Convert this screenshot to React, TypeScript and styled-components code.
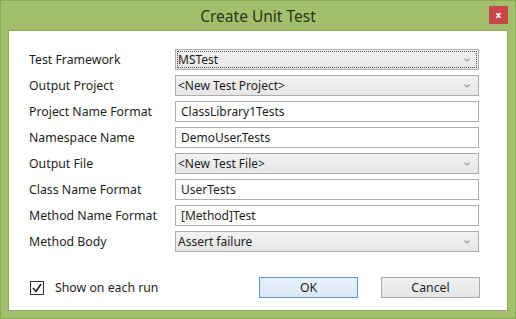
import React from "react";
import styled, { createGlobalStyle, css } from "styled-components";

const Global = createGlobalStyle`
  html, body { margin: 0; padding: 0; }
  body {
    width: 516px; height: 319px; overflow: hidden;
    background: #a4bf6b;
    font-family: "Noto Sans", "Open Sans", sans-serif;
  }
`;

const Window = styled.div`
  box-sizing: border-box;
  width: 516px;
  height: 319px;
  background: #a4bf6b;
  border: 1px solid #8ca95a;
  display: flex;
  flex-direction: column;
`;

const TitleBar = styled.div`
  height: 29px;
  position: relative;
  display: flex;
  align-items: center;
  justify-content: center;
`;

const Title = styled.div`
  font-family: "Noto Sans", sans-serif;
  font-size: 15.5px;
  color: #2c3520;
  margin-top: 1px;
`;

const CloseButton = styled.div`
  position: absolute;
  right: 7px;
  top: 5px;
  width: 19px;
  height: 18px;
  background: #c7474b;
  color: #fff;
  font-family: "DejaVu Sans", sans-serif;
  font-size: 9px;
  font-weight: bold;
  display: flex;
  align-items: center;
  justify-content: center;
  line-height: 1;
`;

const Client = styled.div`
  box-sizing: border-box;
  margin: 0 7px 0 7px;
  height: 281px;
  background: #fff;
  border: 1px solid #8fa85f;
  padding: 18px 27px 0 20px;
  display: flex;
  flex-direction: column;
`;

const Form = styled.div`
  display: grid;
  grid-template-columns: 146px 304px;
  grid-auto-rows: 21px;
  row-gap: 5px;
  align-items: center;
`;

const Label = styled.div`
  font-size: 12.3px;
  color: #1e1e1e;
  white-space: nowrap;
`;

const fieldBase = css`
  box-sizing: border-box;
  height: 21px;
  width: 304px;
  font-size: 12px;
  color: #1e1e1e;
  display: flex;
  align-items: center;
  white-space: nowrap;
`;

const TextBox = styled.div`
  ${fieldBase}
  background: #fff;
  border: 1px solid #abadb3;
  padding-left: 5px;
`;

const Combo = styled.div`
  ${fieldBase}
  position: relative;
  background: linear-gradient(#f2f2f2, #e6e6e6);
  border: 1px solid #adadad;
  padding-left: 2px;
`;

const FocusRing = styled.div`
  position: absolute;
  inset: 1px;
  border: 1px dotted #555;
  pointer-events: none;
`;

const Chevron = styled.svg`
  position: absolute;
  right: 8px;
  top: 8px;
`;

const Footer = styled.div`
  margin-top: 25px;
  display: flex;
  align-items: center;
  height: 21px;
`;

const CheckRow = styled.div`
  display: flex;
  align-items: center;
  gap: 11px;
  font-size: 12.3px;
  color: #1e1e1e;
  margin-left: 1px;
  flex: 1;
`;

const CheckBox = styled.div`
  box-sizing: border-box;
  width: 14px;
  height: 14px;
  border: 1px solid #333;
  background: #fff;
  display: flex;
  align-items: center;
  justify-content: center;
`;

const Buttons = styled.div`
  display: flex;
  gap: 23px;
`;

const Button = styled.div<{ $default?: boolean }>`
  box-sizing: border-box;
  width: 99px;
  height: 21px;
  font-size: 12.3px;
  color: #1e1e1e;
  display: flex;
  align-items: center;
  justify-content: center;
  border: 1px solid ${(p) => (p.$default ? "#5b9bd5" : "#acacac")};
  background: ${(p) =>
    p.$default ? "linear-gradient(#e8f1fb, #dae8f7)" : "linear-gradient(#f0f0f0, #e5e5e5)"};
`;

const ChevronIcon = () => (
  <Chevron width="6" height="4" viewBox="0 0 6 4">
    <path d="M0.5 0.5 L3 3 L5.5 0.5" fill="none" stroke="#9a9a9a" strokeWidth="1.1" />
  </Chevron>
);

type Row = { label: string; value: string; kind: "combo" | "text"; focused?: boolean };

const rows: Row[] = [
  { label: "Test Framework", value: "MSTest", kind: "combo", focused: true },
  { label: "Output Project", value: "<New Test Project>", kind: "combo" },
  { label: "Project Name Format", value: "ClassLibrary1Tests", kind: "text" },
  { label: "Namespace Name", value: "DemoUser.Tests", kind: "text" },
  { label: "Output File", value: "<New Test File>", kind: "combo" },
  { label: "Class Name Format", value: "UserTests", kind: "text" },
  { label: "Method Name Format", value: "[Method]Test", kind: "text" },
  { label: "Method Body", value: "Assert failure", kind: "combo" },
];

export default function App() {
  return (
    <>
      <Global />
      <Window>
        <TitleBar>
          <Title>Create Unit Test</Title>
          <CloseButton>x</CloseButton>
        </TitleBar>
        <Client>
          <Form>
            {rows.map((r) => (
              <React.Fragment key={r.label}>
                <Label>{r.label}</Label>
                {r.kind === "combo" ? (
                  <Combo>
                    {r.focused && <FocusRing />}
                    {r.value}
                    <ChevronIcon />
                  </Combo>
                ) : (
                  <TextBox>{r.value}</TextBox>
                )}
              </React.Fragment>
            ))}
          </Form>
          <Footer>
            <CheckRow>
              <CheckBox>
                <svg width="10" height="10" viewBox="0 0 10 10">
                  <path d="M1 5 L4 8.5 L9 1" fill="none" stroke="#222" strokeWidth="1.6" />
                </svg>
              </CheckBox>
              Show on each run
            </CheckRow>
            <Buttons>
              <Button $default>OK</Button>
              <Button>Cancel</Button>
            </Buttons>
          </Footer>
        </Client>
      </Window>
    </>
  );
}
